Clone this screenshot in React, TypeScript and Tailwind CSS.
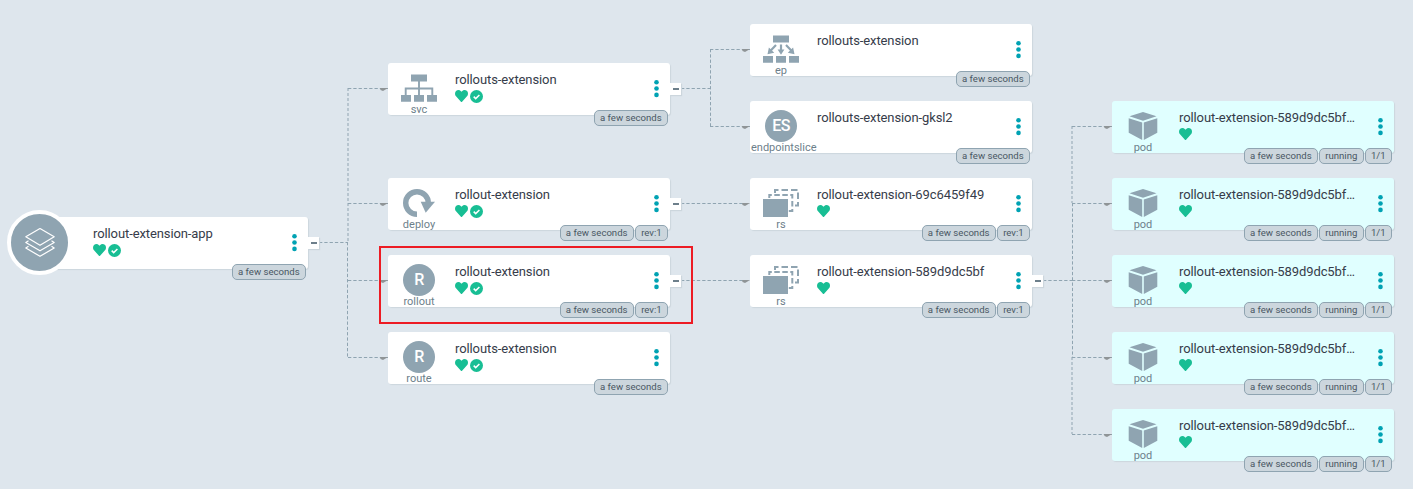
import React from "react";

type Kind = "app" | "svc" | "ep" | "deploy" | "rs" | "pod" | "R" | "ES";

interface NodeData {
  x: number;
  y: number;
  kind: Kind;
  label?: string;
  name: string;
  healthy?: boolean;
  synced?: boolean;
  tags: string[];
  expand?: boolean;
}

const POD = "rollout-extension-589d9dc5bf…";
const AGE = "a few seconds";

const nodes: NodeData[] = [
  { x: 26, y: 217, kind: "app", name: "rollout-extension-app", healthy: true, synced: true, tags: [AGE], expand: true },
  { x: 388, y: 63, kind: "svc", label: "svc", name: "rollouts-extension", healthy: true, synced: true, tags: [AGE], expand: true },
  { x: 388, y: 178, kind: "deploy", label: "deploy", name: "rollout-extension", healthy: true, synced: true, tags: [AGE, "rev:1"], expand: true },
  { x: 388, y: 255, kind: "R", label: "rollout", name: "rollout-extension", healthy: true, synced: true, tags: [AGE, "rev:1"], expand: true },
  { x: 388, y: 332, kind: "R", label: "route", name: "rollouts-extension", healthy: true, synced: true, tags: [AGE] },
  { x: 750, y: 24, kind: "ep", label: "ep", name: "rollouts-extension", tags: [AGE] },
  { x: 750, y: 101, kind: "ES", label: "endpointslice", name: "rollouts-extension-gksl2", tags: [AGE] },
  { x: 750, y: 178, kind: "rs", label: "rs", name: "rollout-extension-69c6459f49", healthy: true, tags: [AGE, "rev:1"] },
  { x: 750, y: 255, kind: "rs", label: "rs", name: "rollout-extension-589d9dc5bf", healthy: true, tags: [AGE, "rev:1"], expand: true },
  ...[101, 178, 255, 332, 409].map((y): NodeData => ({
    x: 1112, y, kind: "pod", label: "pod", name: POD, healthy: true, tags: [AGE, "running", "1/1"],
  })),
];

const edges = [
  "M319 242.5H348", "M347.5 242V357",
  "M348 88.5H388", "M348 203.5H388", "M348 280.5H388", "M348 357.5H388",
  "M681 88.5H710", "M710.5 49V126", "M710 49.5H750", "M710 126.5H750",
  "M681 203.5H750", "M681 280.5H750",
  "M1043 280.5H1072", "M1072.5 203V357",
  "M1072 126.5H1112", "M1072 203.5H1112", "M1072 280.5H1112", "M1072 357.5H1112", "M1072 434.5H1112",
];

const softEdges = ["M348 88V242", "M1072 126V203", "M1072 357V434"];

const arrows = nodes.filter((n) => n.kind !== "app").map((n) => [n.x, n.y + (n.y === 63 ? 25 : 25)]);

function KindIcon({ kind }: { kind: Kind }) {
  if (kind === "R" || kind === "ES") {
    return (
      <div className="flex size-8 items-center justify-center rounded-full bg-[#8fa4b1] text-base font-medium tracking-[-0.5px] text-white">
        {kind}
      </div>
    );
  }
  return (
    <svg width="38" height="32" viewBox="0 0 38 32" fill="#8fa4b1" stroke="none">
      {kind === "svc" && (
        <>
          <path d="M11 2.500h16v7H11zM1 23h10v6.800H1zM14 23h10v6.800H14zM27 23h10v6.800H27z" />
          <path d="M19 9v15M5.700 24v-7.500h26.600V24" fill="none" stroke="#8fa4b1" strokeWidth="1.900" />
        </>
      )}
      {kind === "ep" && (
        <>
          <path d="M11 2.500h16v7H11zM1 23h10v6.800H1zM14 23h10v6.800H14zM27 23h10v6.800H27z" />
          <path d="M14 12l-5.500 5.700M24 12l5.500 5.700M19 11.500v6" fill="none" stroke="#8fa4b1" strokeWidth="2.200" />
          <path d="M5.500 21.200l1.400-6.700 5.300 5.200zM32.500 21.200l-1.400-6.700-5.300 5.200zM19 21.700l-3.400-5.200h6.800z" />
        </>
      )}
      {kind === "deploy" && (
        <>
          <path d="M17 27.300A11.300 11.300 0 1 1 28.300 16" fill="none" stroke="#8fa4b1" strokeWidth="5.400" />
          <path d="M20.700 14.700H35L25.700 25.700z" />
        </>
      )}
      {kind === "rs" && (
        <>
          <path d="M1 12h25v18H1z" />
          <path d="M7.300 11V8h23v16h-3.500" fill="none" stroke="#8fa4b1" strokeWidth="2" strokeDasharray="5.500 2.500" />
          <path d="M13 6V3h23v15.500h-3" fill="none" stroke="#8fa4b1" strokeWidth="2" strokeDasharray="6.500 3" />
        </>
      )}
      {kind === "pod" && (
        <path d="M19 2l13.500 4.300L19 10.700 5.500 6.300zM4.700 8.200l13.500 4.300V30L4.700 22.700zM33.300 8.200L19.800 12.500V30l13.500-7.300z" />
      )}
    </svg>
  );
}

function AppIcon() {
  return (
    <div className="absolute -left-[19px] -top-[7px] flex size-[65px] items-center justify-center rounded-full border-4 border-white bg-[#8fa4b1]">
      <svg width="32" height="32" viewBox="0 0 32 32" fill="none" stroke="#fff" strokeWidth="1.200" strokeLinejoin="round">
        <path d="M16 1.500l14.200 8.300L16 18.300 1.800 9.800z" />
        <path d="M4.500 13.800l-2.700 1.700L16 23.800l14.200-8.300-2.700-1.700" />
        <path d="M4.500 19.300l-2.700 1.700L16 29.300 30.200 21l-2.700-1.700" />
      </svg>
    </div>
  );
}

function Heart() {
  return (
    <svg width="13" height="12" viewBox="0 30 512 452" preserveAspectRatio="none" fill="#18be94">
      <path d="M462 62c-55-47-136-38-186 14l-20 20-20-20C186 24 105 15 50 62c-63 54-66 150-10 208l193 200c13 13 33 13 46 0l193-200c56-58 53-154-10-208z" />
    </svg>
  );
}

function Check() {
  return (
    <svg width="13" height="13" viewBox="0 0 13 13">
      <circle cx="6.500" cy="6.500" r="6.500" fill="#18be94" />
      <path d="M3.700 6.600l2 2L9.400 5" fill="none" stroke="#fff" strokeWidth="1.500" />
    </svg>
  );
}

function ResourceNode({ node }: { node: NodeData }) {
  const bg = node.kind === "pod" ? "bg-[#e0ffff]" : "bg-white";
  return (
    <div
      className={`absolute flex h-[52px] w-[282px] rounded-[3px] shadow-[1px_1px_1px_#ccd6dd] ${bg}`}
      style={{ left: node.x, top: node.y }}
    >
      {node.kind === "app" ? (
        <div className="w-[67px] shrink-0"><AppIcon /></div>
      ) : (
        <div className="flex w-[62px] shrink-0 flex-col items-center pt-[9px]">
          <KindIcon kind={node.kind} />
          <div className="w-[60px] whitespace-nowrap text-center text-[11px] leading-[11px] text-[#6d7f8b]">{node.label}</div>
        </div>
      )}
      <div className={`flex flex-col pt-[8px] ${node.kind === "app" ? "" : "ml-[5px]"}`}>
        <span className="w-[177px] whitespace-nowrap text-[13px] leading-[18px] tracking-[-0.1px] text-[#363c4a]">{node.name}</span>
        <div className="flex h-[14px] items-center gap-[2px]">
          {node.healthy && <Heart />}
          {node.synced && <Check />}
        </div>
      </div>
      <svg className="ml-[22px] mt-[16px]" width="6" height="20" viewBox="0 0 6 20" fill="#00a2b3">
        <circle cx="2.500" cy="3.200" r="2.300" />
        <circle cx="2.500" cy="9.500" r="2.300" />
        <circle cx="2.500" cy="15.900" r="2.300" />
      </svg>
      <div className="absolute -bottom-[11px] right-[2px] flex gap-px">
        {node.tags.map((t) => (
          <span key={t} className="h-4 whitespace-nowrap rounded-[5px] border border-[#8fa4b1] bg-[#ccd6dd] px-[5.300px] text-[9.600px] leading-[14px] text-[#495763]">
            {t}
          </span>
        ))}
      </div>
      {node.expand && (
        <div className="absolute -right-[11px] top-5 flex h-3 w-[11px] items-center justify-center bg-white shadow-[1px_1px_1px_#ccd6dd]">
          <div className="h-[2px] w-[6px] bg-[#6d7f8b]" />
        </div>
      )}
    </div>
  );
}

export default function App() {
  return (
    <main className="relative h-[489px] w-[1413px] overflow-hidden bg-[#dee6ed] font-['Roboto',sans-serif]">
      <svg className="absolute inset-0" width="1413" height="489">
        {edges.map((d) => (
          <path key={d} d={d} fill="none" stroke="#8fa4b1" strokeWidth="1" strokeDasharray="3.300 2" />
        ))}
        {softEdges.map((d) => (
          <path key={d} d={d} fill="none" stroke="#8fa4b1" strokeOpacity="0.5" strokeWidth="2" strokeDasharray="3 2" />
        ))}
        {arrows.map(([x, y]) => (
          <path key={`${x}-${y}`} d={`M${x - 8} ${y}h8l-5 3-2.500-1z`} fill="#8f9496" />
        ))}
      </svg>
      {nodes.map((n) => (
        <ResourceNode key={`${n.x}-${n.y}`} node={n} />
      ))}
      <div className="absolute left-[379px] top-[246px] h-[78px] w-[314px] border-2 border-[#ed1c24]" />
    </main>
  );
}
